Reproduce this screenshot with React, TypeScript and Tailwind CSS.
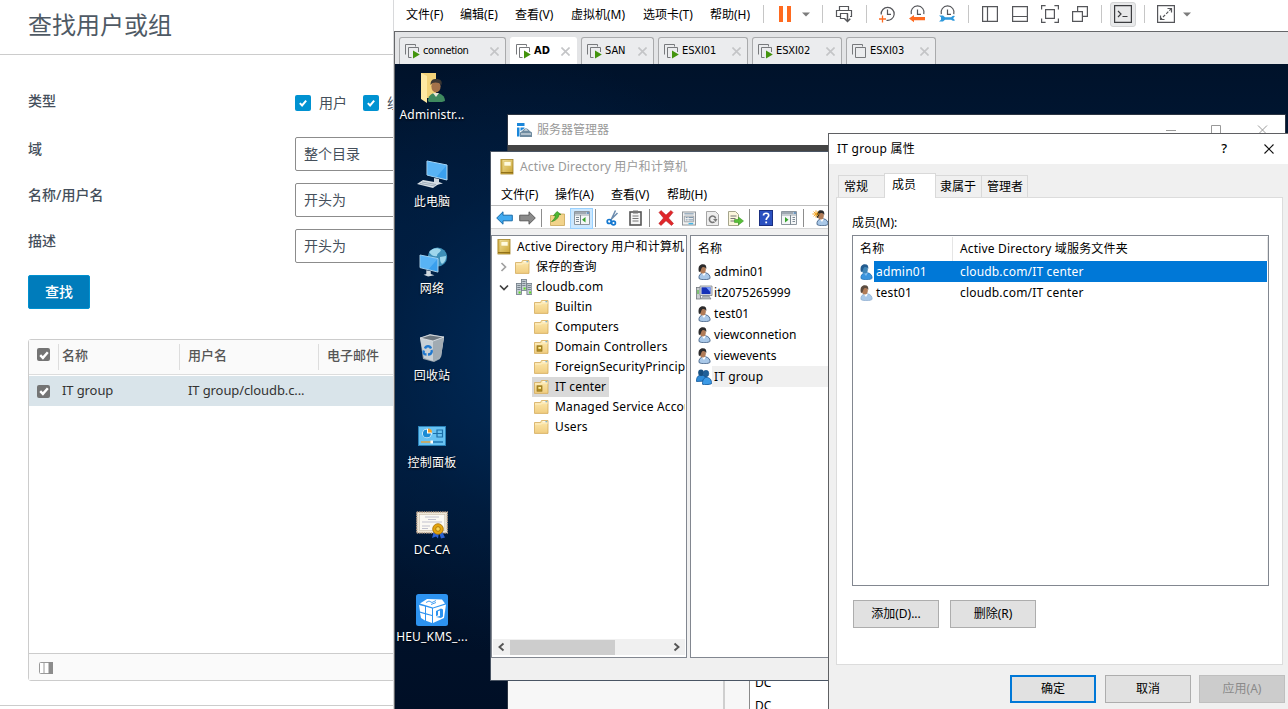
import React from "react";

const zh = "font-['Noto_Sans','Noto_Sans_CJK_SC',sans-serif]";
const tabFont = "font-['DejaVu_Sans_Condensed','Noto_Sans_CJK_SC',sans-serif]";

/* ---------- small icons ---------- */

const Caret = () => (
  <svg width="8" height="5" viewBox="0 0 8 5" className="shrink-0"><path d="M0 0.5h8L4 4.5z" fill="#7c7c7c" /></svg>
);

const Check = ({ className, size }: { className: string; size: number }) => (
  <span className={"flex shrink-0 items-center justify-center rounded-[2px] " + className}>
    <svg width={size} height={size} viewBox="0 0 12 12"><path d="M2.2 6.2 4.9 8.9 9.8 3.2" fill="none" stroke="#fff" strokeWidth="2.4" /></svg>
  </span>
);

const Book = () => (
  <svg width="14" height="16" viewBox="0 0 14 16" className="shrink-0">
    <defs><linearGradient id="bk" x1="0" y1="0" x2="1" y2="1"><stop offset="0" stopColor="#f3e3a0" /><stop offset="1" stopColor="#c9a22e" /></linearGradient></defs>
    <rect x="1" y="0.5" width="12" height="14.5" fill="url(#bk)" stroke="#a08024" strokeWidth="0.8" />
    <rect x="0.8" y="0.5" width="1.600" height="14.5" fill="#c4a23c" />
    <rect x="4" y="2.5" width="7" height="4.5" fill="#fffbe0" stroke="#d9bf62" strokeWidth="0.6" />
    <path d="M1 13.600h12" stroke="#8a6b14" strokeWidth="1" />
  </svg>
);

const Folder = ({ ou }: { ou?: boolean }) => (
  <svg width="15" height="14" viewBox="0 0 15 14" className="shrink-0">
    <defs><linearGradient id="fd" x1="0" y1="0" x2="0" y2="1"><stop offset="0" stopColor="#fde9ae" /><stop offset="1" stopColor="#f0cd80" /></linearGradient></defs>
    <path d="M0.5 2.5h6l1-2h6.5v12.9H0.5z" fill="url(#fd)" stroke="#d3ab5c" strokeWidth="0.8" />
    <path d="M8.5 1.8h3" stroke="#fff" strokeWidth="1" /><path d="M11.5 1.8h1.6" stroke="#4d9fd8" strokeWidth="1" />
    <path d="M1 4h6.5l1-1h5.5" stroke="#fff3cf" strokeWidth="0.8" fill="none" />
    {ou && <g><rect x="3" y="5.8" width="5" height="5.400" fill="#b48d22" stroke="#8e7222" strokeWidth="0.7" /><rect x="4.400" y="7" width="2.600" height="1.800" fill="#fff0a0" /></g>}
  </svg>
);

const Domain = () => (
  <svg width="16" height="16" viewBox="0 0 16 16" className="shrink-0">
    {[[5, 0], [0, 4], [10.5, 4]].map(([x, y]) => (
      <g key={x}>
        <rect x={x + 0.4} y={y + 0.4} width="5" height="11" fill="#c3ccd3" stroke="#6f7a84" strokeWidth="0.8" />
        <path d={`M${x + 1.3} ${y + 2.5}h3.2M${x + 1.3} ${y + 4.5}h3.2M${x + 1.3} ${y + 6.5}h3.2`} stroke="#65717c" strokeWidth="0.8" />
        <rect x={x + 2.6} y={y + 8.5} width="2" height="2" fill="#5edc1e" />
      </g>
    ))}
  </svg>
);

const Person = ({ tint, soft }: { tint?: boolean; soft?: boolean }) => (
  <svg width="14" height="16" viewBox="0 0 14 16" className="shrink-0">
    <path d="M2 14.500C1.500 11 3.500 9.300 6 9l2.500-.2c3 .5 4.700 2.500 4.600 5.500-1.500 1.600-8.600 2-11.100.2z" fill={tint ? "#3b95de" : "#a9c8e8"} stroke={tint ? "#2072b8" : soft ? "#8faed0" : "#36567c"} strokeWidth="0.8" />
    <path d="m4.800 9 2.200 3L8.800 9z" fill={tint ? "#7fbdf0" : "#fff"} />
    <ellipse cx="5.800" cy="5.600" rx="3" ry="3.900" fill={tint ? "#4086b8" : "#b17c58"} />
    <path d="M1.800 7.600C.8 2.200 3 .3 5.800.3c2.900 0 4 1.900 3.400 5C8.600 3.400 7 2.800 5.400 3.200 4.200 3.600 4.400 6 3 8z" fill={tint ? "#235c8f" : soft ? "#5c4c40" : "#2c2b2c"} />
  </svg>
);

const Group = () => (
  <svg width="16" height="16" viewBox="0 0 16 16" className="shrink-0">
    <path d="M.5 12.500C.4 8 2 6.500 4.500 6.300l4 .2c2 .8 3 2.500 2.900 5.500z" fill="#2f8bd8" stroke="#0e5699" strokeWidth=".8" />
    <ellipse cx="5" cy="3.800" rx="2.800" ry="3.300" fill="#174f80" />
    <ellipse cx="10" cy="4.600" rx="2.800" ry="3.300" fill="#1f6099" stroke="#0e4a86" strokeWidth=".5" />
    <path d="M6.500 15.300c-.2-4.500 1.400-6.800 4-6.900 3.400.1 5.200 2.400 5 6.300-2 1-7 1.200-9 .6z" fill="#3c9ae6" stroke="#0e5699" strokeWidth=".8" />
  </svg>
);

const Computer = () => (
  <svg width="17" height="15" viewBox="0 0 17 15" className="shrink-0">
    <rect x=".5" y="2.500" width="4" height="11.500" fill="#c9cdd0" stroke="#70777c" strokeWidth=".8" />
    <path d="M2 5v4" stroke="#4eba3a" strokeWidth="1.200" />
    <path d="M4 1h12v9.500H4z" fill="#dfe2e4" stroke="#7f868b" strokeWidth=".8" />
    <path d="M5.500 2.300h9v6.800h-9z" fill="#1631b8" /><path d="M10 2.300h4.500v5z" fill="#7ea2ff" />
    <path d="M7 11h6l2 3H5z" fill="#b3b8bc" stroke="#777e83" strokeWidth=".6" />
  </svg>
);

const VmIcon = ({ on = true }: { on?: boolean }) => (
  <svg width="15" height="15" viewBox="0 0 15 15" className="shrink-0">
    <path d="M.5 10.500V.5h10v2" fill="none" stroke="#77797c" />
    <path d={on ? "M6.500 13.500h-3v-10h10v4.500" : "M3.500 3.500h10v10h-10z"} fill="none" stroke="#77797c" />
    {on && <path d="M8 6.500v8l6.800-4z" fill="#43940d" />}
  </svg>
);

const CloseX = ({ size, color, w = 1 }: { size: number; color: string; w?: number }) => (
  <svg width={size} height={size} viewBox="0 0 10 10" className="shrink-0"><path d="M.5.5l9 9M9.500.5l-9 9" stroke={color} strokeWidth={w} /></svg>
);

/* ---------- directory search page ---------- */

const formRows = [
  { label: "域", value: "整个目录" },
  { label: "名称/用户名", value: "开头为" },
  { label: "描述", value: "开头为" },
];

function SearchPage() {
  return (
    <section className={"h-[709px] w-[393px] shrink-0 overflow-hidden bg-white text-[14px] text-[#454f5b] " + zh}>
      <div className="w-[560px]">
        <header className="flex h-[55px] items-center border-b border-[#cccccc] pb-[5px] pl-7">
          <h1 className="text-[24px] leading-none font-normal text-[#4f5a65]">查找用户或组</h1>
        </header>
        <div className="pl-7">
          <div className="flex h-[82px] pt-[36px]">
            <div className="w-[267px] leading-[20px] font-medium">类型</div>
            <div className="mt-px flex h-[22px] items-center">
              <Check className="h-4 w-4 bg-[#0092d1]" size={10} />
              <span className="ml-2 w-[44px] leading-[20px]">用户</span>
              <Check className="h-4 w-4 bg-[#0092d1]" size={10} />
              <span className="ml-2 leading-[20px]">组</span>
            </div>
          </div>
          {formRows.map((r) => (
            <div key={r.label} className="flex h-[46px]">
              <div className="w-[267px] pt-[2px] leading-[20px] font-medium">{r.label}</div>
              <div className="flex h-[34px] w-[240px] items-center rounded-[2px] border border-[#8c8c8c] pb-[2px] pl-2">{r.value}</div>
            </div>
          ))}
          <button className="flex h-[34px] w-[62px] items-center justify-center rounded-[2px] border border-[#0091d0] bg-[#007cbb] pb-[2px] font-medium text-white">查找</button>
          <div className="mt-[30px] h-[342px] w-[520px] rounded-[3px] border border-[#cccccc] text-[13px] text-[#565656]">
            <div className="flex h-[35px] border-b border-[#dddddd] bg-[#fafafa] font-medium">
              <div className="mt-[4px] mb-[4px] flex w-[30px] border-r border-[#dddddd] pt-[4px] pl-2"><Check className="h-[13px] w-[13px] bg-[#747474]" size={12} /></div>
              <div className="my-[4px] w-[121px] border-r border-[#dddddd] pl-[3px] leading-[23px]">名称</div>
              <div className="my-[4px] w-[139px] border-r border-[#dddddd] pl-[8px] leading-[23px]">用户名</div>
              <div className="my-[4px] pl-[8px] leading-[23px]">电子邮件</div>
            </div>
            <div className="mt-px flex h-[30px] items-center bg-[#d9e4ea] tracking-[-0.1px] text-[#333]">
              <div className="flex w-[33px] pl-2"><Check className="h-[13px] w-[13px] bg-[#747474]" size={12} /></div>
              <div className="w-[126px]">IT group</div>
              <div className="w-[130px]">IT group/cloudb.c...</div>
            </div>
            <div className="mt-[247px] flex h-[27px] items-center border-t border-[#cccccc] bg-[#fafafa] pt-[2px] pl-[10px]">
              <svg width="14" height="12" viewBox="0 0 14 12"><rect x=".5" y=".5" width="13" height="11" rx="1" fill="#fff" stroke="#9a9a9a" /><path d="M5 0v12" stroke="#9a9a9a" /><path d="M9.500 0H14v12H9.500z" fill="#8c8c8c" /></svg>
            </div>
          </div>
        </div>
        <div className="mt-[24px] border-t border-[#cccccc]" />
      </div>
    </section>
  );
}

/* ---------- virtual machine console ---------- */

const vmMenus = [
  ["文件(F)", "w-[54px]"], ["编辑(E)", "w-[55px]"], ["查看(V)", "w-[56px]"],
  ["虚拟机(M)", "w-[72px]"], ["选项卡(T)", "w-[67px]"], ["帮助(H)", "w-[54px]"],
];

const Slot = ({ children, w = "w-[30px]" }: { children: React.ReactNode; w?: string }) => (
  <div className={"flex h-[28px] shrink-0 items-center justify-center " + w}>{children}</div>
);
const Sep = () => <div className="h-[18px] w-px shrink-0 bg-[#c6c6c6]" />;

const Clock = ({ kind }: { kind: "add" | "back" | "tool" }) => (
  <svg width="18" height="18" viewBox="0 0 18 18">
    <path d={kind === "add" ? "M3.200 9.500A6.500 6.500 0 1 1 8.500 15.300" : "M3.300 9.200A6.500 6.500 0 1 1 15.800 9.200"} fill="none" stroke="#55565a" strokeWidth="1.200" />
    <path d="M9.500 4.500v4.800h3.500" fill="none" stroke="#55565a" strokeWidth="1.200" />
    {kind === "add" && <path d="M4.500 10.500v7M1 14h7" stroke="#ff6a1f" strokeWidth="1.300" />}
    {kind === "back" && <path d="M1 13.500 6 10v2h11v3.200H6v2z" fill="#ff6a1f" />}
    {kind === "tool" && <path d="M1 10.500h4L7 12.200h6.200A3 3 0 0 1 17 11l-1.800 2.200 1.800 2A3 3 0 0 1 13.200 14.800H7L5 16.500H1l2-1.800v-2.400z" fill="#2c98dc" />}
  </svg>
);

function VmToolbar() {
  const g = { fill: "none", stroke: "#55565a", strokeWidth: 1.2 };
  return (
    <div className={"flex h-[31px] items-center bg-white pb-[3px] text-[12px] text-black " + zh}>
      <div className="flex w-[369px] shrink-0 pl-[12px] pt-px">
        {vmMenus.map(([t, w]) => <div key={t} className={"shrink-0 whitespace-nowrap " + w}>{t}</div>)}
      </div>
      <Sep />
      <Slot w="w-[41px]"><svg width="12" height="16" viewBox="0 0 12 16"><path d="M0 0h4v16H0zM8 0h4v16H8z" fill="#ff6a1f" /></svg></Slot>
      <div className="-ml-[3px]"><Caret /></div>
      <div className="w-[12px]" />
      <Sep />
      <Slot w="w-[43px]">
        <svg width="18" height="18" viewBox="0 0 18 18" className="-ml-px"><path d="M4.500 5.500v-4h9v4M5 11.500H1.500v-6h15v6H15M10 13.500H5.500v-5h7.500" {...g} /><path d="M12.500 8.500v8M9.700 13.700l2.800 2.800 2.800-2.800" {...g} strokeWidth={1.500} /></svg>
      </Slot>
      <Sep />
      <div className="w-[5px]" />
      <Slot><Clock kind="add" /></Slot><Slot><Clock kind="back" /></Slot><Slot><Clock kind="tool" /></Slot>
      <div className="w-[6px]" /><Sep /><div className="w-[6px]" />
      <Slot><svg width="16" height="16" viewBox="0 0 16 16"><path d="M.6.6h14.800v14.800H.6zM5.500.6v14.800" {...g} /></svg></Slot>
      <Slot><svg width="16" height="16" viewBox="0 0 16 16"><path d="M.6.6h14.800v14.800H.6zM.6 10.500h14.800" {...g} /></svg></Slot>
      <Slot><svg width="18" height="18" viewBox="0 0 18 18"><path d="M.6 4.500V.6h4M13.400.6h4v4M17.400 13.400v4h-4M4.600 17.400h-4v-4M4.600 4.600h8.800v8.800H4.600z" {...g} /></svg></Slot>
      <Slot><svg width="16" height="16" viewBox="0 0 16 16"><path d="M5.600 5.500V.6h9.800v9.800h-5M.6 5.600h9.800v9.800H.6z" {...g} /></svg></Slot>
      <div className="w-[6px]" /><Sep /><div className="w-[6px]" />
      <Slot>
        <div className="flex h-[25px] w-[26px] items-center justify-center rounded-[3px] border border-[#d3d4d5] bg-[#e8e9ea]">
          <svg width="18" height="18" viewBox="0 0 18 18"><path d="M.6.6h16.800v16.800H.6zM4 6l3 3-3 3M8.500 11.500h5" {...g} stroke="#3c3d40" /></svg>
        </div>
      </Slot>
      <div className="w-[6px]" /><Sep /><div className="w-[6px]" />
      <Slot><svg width="18" height="18" viewBox="0 0 18 18"><path d="M.6.6h16.800v16.800H.6zM10.500 3.500h4v4M3.500 10.500v4h4" {...g} /><path d="M14.500 3.500l-11 11" {...g} strokeDasharray="3 1.500" /></svg></Slot>
      <div className="w-[2px]" /><Caret />
    </div>
  );
}

const vmTabs = [
  { t: "connetion", w: "w-[107px]", on: true, tr: "tracking-[-0.4px]" },
  { t: "AD", w: "w-[67px]", on: true, active: true, tr: "" },
  { t: "SAN", w: "w-[73px]", on: true, tr: "tracking-[-0.1px]" },
  { t: "ESXI01", w: "w-[90px]", on: true, tr: "tracking-[-0.1px]" },
  { t: "ESXI02", w: "w-[90px]", on: true, tr: "tracking-[-0.1px]" },
  { t: "ESXI03", w: "w-[90px]", on: false, tr: "tracking-[-0.1px]" },
];

function VmTabs() {
  return (
    <div className={"flex h-[33px] items-end gap-[4px] border-t border-[#66676a] bg-[#e3e4e6] pl-[4px] text-[11px] text-black " + tabFont}>
      {vmTabs.map((tab) => (
        <div key={tab.t} className={"flex h-[27px] shrink-0 items-center rounded-t-[3px] border border-b-0 pr-[6px] pl-[5px] " + tab.w + (tab.active ? " border-white bg-white font-bold" : " border-[#a9aaac] bg-[#ebecee]")}>
          <VmIcon on={tab.on} />
          <span className={"ml-[3px] grow whitespace-nowrap pt-px " + tab.tr}>{tab.t}</span>
          <CloseX size={9} color="#c4c5c7" w={1.8} />
        </div>
      ))}
    </div>
  );
}

/* ---------- desktop icons ---------- */

const Monitor = ({ x, y }: { x: number; y: number }) => (
  <g transform={`translate(${x} ${y})`}>
    <path d="M0 0 20 4v15L0 14z" fill="#3aa0ee" stroke="#b9dcf2" strokeWidth="1" />
    <path d="M0 0 20 4 9 16.500 0 14z" fill="#6dc0fa" opacity=".6" />
    <path d="M7 17l5 1v3l4 1.500-7 1.500-5-2 3-1z" fill="#cfd8df" />
  </g>
);

const desktop = [
  { t: "Administr...", i: <g><path d="M5 1h15v25H5z" fill="#f3d37a" /><path d="M5 1l6 3v27l-6-4z" fill="#ffe9a3" /><path d="M12 29c0-5 3-8 8-8s9 3 9 8l-3 1H13z" fill="#3f8a5f" /><ellipse cx="20" cy="14.500" rx="4.600" ry="6" fill="#a3724a" /><path d="M14.500 13c0-5 2-6 6-6s6 2 5 6c-2-3-7-3-9-2z" fill="#3b3733" /><path d="m17 21 3 4 3-4z" fill="#e8e6d8" /></g> },
  { t: "此电脑", i: <g><Monitor x={11} y={2} /><path d="M1 25l6-4 17 3-7 5z" fill="#d9e0e5" /><path d="M4 24.500l15 2.500M6 23l14 2.500" stroke="#8fa0ad" strokeWidth=".8" /></g> },
  { t: "网络", i: <g><circle cx="21.500" cy="11" r="9.600" fill="#3d8fb8" /><path d="M13 6c3-4 9-5 12-2-1 3-4 3-4 6-3 1-6-1-8-4zM24 11l6-1c0 4-1 6-4 8-2-2-2-4-2-7z" fill="#9fd7ec" /><g transform="translate(4 9) scale(.9)"><Monitor x={0} y={0} /></g></g> },
  { t: "回收站", i: <g><path d="M4 5l10-4 14 3-4 22-6 3-11-3z" fill="#9aa6af" /><path d="M4 5l13 3 11-4-3 20-8 4-9-3z" fill="#c8d0d6" /><path d="M17 8l11-4-3 20-8 4z" fill="#a1abb3" /><path d="M4 5l10-3 14 2-11 4z" fill="#6c767e" stroke="#e4e9ec" strokeWidth=".8" /><path d="M9 15.500c1-3 5-3 6 0M15.500 17c1 3-1 4.500-3.500 4.500M10.500 21.500c-3 0-3.500-2-2.500-4" fill="none" stroke="#1f78cf" strokeWidth="2.400" /></g> },
  { t: "控制面板", i: <g><rect x="2.500" y="6.500" width="27" height="19" fill="#68c2f2" stroke="#2b82b8" /><circle cx="11" cy="13.500" r="4.700" fill="#fff" /><path d="M11 13.500V9.500a4 4 0 1 0 3.900 4z" fill="#198bd4" /><path d="M12 12.500v-4a4 4 0 0 1 4 4z" fill="#f3a028" /><path d="M21 10h5.500v7H21zM21 13.500h5.500M17 13.500h4" fill="none" stroke="#1c6fa8" strokeWidth="1.200" /><path d="M5 22h10" stroke="#f3a028" strokeWidth="1.300" /><path d="M15 22h12" stroke="#176ba8" strokeWidth="1.300" /><rect x="14.500" y="20.500" width="2.500" height="3" fill="#fff" /></g> },
  { t: "DC-CA", i: <g><rect x=".8" y="5" width="30.500" height="21" fill="#eee7d8" stroke="#b39b84" strokeWidth="1.400" strokeDasharray="1.500 .8" /><rect x="3.300" y="7.500" width="25.500" height="16" fill="#fbf9f3" stroke="#c9bda9" strokeWidth=".6" /><path d="M9 10h14M12 12.500h8M6 15h20M6 19h8M6 21.500h6" stroke="#b4b4c4" strokeWidth=".8" /><path d="M18 24l-2 7 4-1.500 2 2 1-6 2 6 4-1-3-6z" fill="#2c62d4" /><circle cx="22" cy="22" r="5.300" fill="#e5a60e" stroke="#a56d04" strokeWidth=".8" /><circle cx="22" cy="22" r="2.300" fill="#f8d658" stroke="#a56d04" strokeWidth=".8" /></g> },
  { t: "HEU_KMS_...", i: <g><rect width="32" height="32" rx="2.500" fill="#2d93f0" /><path d="M4 9.500 11 5l15 .5 3 4-12 4z" fill="#fff" /><path d="M3 11l6 1.500v6.500L4 17.500zM10 12.800l6 1.700v6.500l-6-1.700zM4 18.800l5 1.400v6.300L5 24zM10 20.500l6 1.600v7l-6-2.300z" fill="#fff" /><path d="M17 14.500 30 10.500l-2 13.500-11 5z" fill="#fff" /><path d="M20 17l5-2.500 2 1v7l-2 1.500-5-1 4-1v-5.500l-2 .8v4l-2 1z" fill="#2d93f0" /><path d="M10 8.500l3-1.500 3 1.500 4-2M15 10.500l5-2" fill="none" stroke="#2d93f0" strokeWidth=".9" /></g> },
];

function DesktopIcons() {
  return (
    <div className={"flex w-[74px] flex-col pt-[8px] text-[12px] text-white " + zh}>
      {desktop.map((d) => (
        <div key={d.t} className="flex h-[87px] shrink-0 flex-col items-center">
          <svg width="32" height="32" viewBox="0 0 32 32" className="shrink-0">{d.i}</svg>
          <span className="leading-[22px] tracking-[0.2px] whitespace-nowrap [text-shadow:0_1px_2px_#000]">{d.t}</span>
        </div>
      ))}
    </div>
  );
}

/* ---------- server manager ---------- */

function ServerManager() {
  return (
    <div className={"absolute top-[114px] left-[507px] flex h-[595px] w-[779px] flex-col overflow-hidden border border-b-0 border-[#2b3442] bg-[#f7f7f7] " + zh}>
      <div className="flex h-[30px] shrink-0 items-center bg-white pr-[17px] pl-[9px] text-[12px] text-[#999]">
        <svg width="15" height="15" viewBox="0 0 15 15"><path d="M0 0h7.500v3H0zM0 4.500h2.500v9H0z" fill="#1a86d9" /><path d="M3.500 4.500h4v.8L3.500 8z" fill="#1a86d9" /><path d="M3 9.500 6 7.500h6l3 2v4.500H3z" fill="#6f8ba0" /><path d="M6 8q3-4.500 6 0" fill="none" stroke="#6f8ba0" strokeWidth="1.200" /><path d="M4 11h10" stroke="#fff" strokeWidth=".9" /></svg>
        <span className="ml-[5px] grow">服务器管理器</span>
        <svg width="102" height="10" viewBox="0 0 102 10"><path d="M0 5.500h10M45.500.5h9v9h-9zM92 .5l9 9M101 .5l-9 9" fill="none" stroke="#999" /></svg>
      </div>
      <div className="h-[8px] shrink-0 bg-[#444444]" />
      <div className="flex grow pt-[520px] text-[12px] text-black">
        <div className="w-[217px] shrink-0 border-r-2 border-[#cfcfcf]" />
        <div className="w-[24px] shrink-0" />
        <div className="grow border-l border-[#8a8a8a] bg-white pl-[5px]">
          <div className="h-[23px] leading-[20px]">DC</div>
          <div className="h-[23px] leading-[20px]">DC</div>
        </div>
      </div>
    </div>
  );
}

/* ---------- directory console ---------- */

const TSep = () => <div className="h-[18px] w-px shrink-0 bg-[#8d8d8d]" />;
const Tool = ({ children, w }: { children: React.ReactNode; w: string }) => <div className={"flex h-[22px] shrink-0 items-center justify-center " + w}>{children}</div>;

const PaneIcon = ({ flip }: { flip?: boolean }) => (
  <svg width="16" height="14" viewBox="0 0 16 14" className="shrink-0"><path d="M.5.5h15v13H.5z" fill="#f4f6f7" stroke="#8d969e" /><path d="M1 2h11" stroke="#8a959f" strokeWidth="1.600" /><path d="M12.500 2h2.500" stroke="#4d7fae" strokeWidth="1.600" /><path d="M1 4h14" stroke="#9aa4ad" /><path d={flip ? "M9.500 4v9.500" : "M6.500 4v9.500"} stroke="#7b8791" /><path d={flip ? "M4 6v5.500L7.500 8.700z" : "M11.500 6v5.500L8 8.700z"} fill="#35a32b" /><path d={flip ? "M11.500 6.500h2.500M11.500 8.500h2.500M11.500 10.500h2.500" : "M2 6.500h3M2 8.500h3M2 10.500h3"} stroke="#7c8894" /></svg>
);

function AdToolbar() {
  return (
    <div className="flex h-[23px] shrink-0 items-center border-b border-[#d5d5d5] bg-white pt-[2px] pl-[2px]">
      <Tool w="w-[22px]"><svg width="17" height="14" viewBox="0 0 17 14"><path d="M.7 7 7 .8v3.400h9.300v5.600H7v3.400z" fill="#41aaf0" stroke="#186ba8" /></svg></Tool>
      <Tool w="w-[25px]"><svg width="17" height="14" viewBox="0 0 17 14"><path d="M16.300 7 10 .8v3.400H.7v5.600H10v3.400z" fill="#8b8b8b" stroke="#5c5c5c" /></svg></Tool>
      <div className="w-[1px]" /><TSep />
      <Tool w="w-[28px]"><svg width="15" height="15" viewBox="0 0 15 15" className="ml-[3px]"><path d="M.5 4.500h5l1-1.500h8v11.500H.5z" fill="#f2d38a" stroke="#c9a456" strokeWidth=".8" /><path d="M1.500 10.500C2.500 9.500 5 8 5.500 4.500H3.500L7 .5l4 3H9C8.500 7.500 5 10 1.500 10.500z" fill="#4db833" stroke="#2c8118" strokeWidth=".6" /></svg></Tool>
      <div className="flex h-[21px] w-[23px] shrink-0 items-center justify-center border border-[#99d1ff] bg-[#cce8ff]"><PaneIcon /></div>
      <div className="w-[2px]" /><TSep />
      <Tool w="w-[32px]"><svg width="13" height="16" viewBox="0 0 13 16"><path d="M9.500.5 5 10M11.500 3 4 10.500" stroke="#6c8cae" strokeWidth="1.500" fill="none" /><circle cx="3.200" cy="11.500" r="2" fill="none" stroke="#1578d0" strokeWidth="1.700" /><circle cx="7.500" cy="13" r="1.900" fill="none" stroke="#1578d0" strokeWidth="1.700" /></svg></Tool>
      <Tool w="w-[15px]"><svg width="13" height="16" viewBox="0 0 13 16"><rect x="1" y="2" width="11" height="13" fill="#f5f5f5" stroke="#555" strokeWidth="1.600" /><path d="M4 .5h5v3H4z" fill="#777" /><path d="M3.500 6h6M3.500 8.500h6M3.500 11h6" stroke="#777" /></svg></Tool>
      <div className="w-[6px]" /><TSep />
      <Tool w="w-[32px]"><svg width="16" height="16" viewBox="0 0 16 16"><path d="m1 2.500 2-2L8 5l5-4.500 2 2L10.500 8l5 5.500-2 2L8 10.800l-5 4.700-2.200-2L5.500 8z" fill="#e0262a" stroke="#b01418" strokeWidth=".5" /></svg></Tool>
      <Tool w="w-[14px]"><svg width="15" height="15" viewBox="0 0 15 15"><rect x=".5" y=".5" width="14" height="14" fill="#f1f1f1" stroke="#8a8f94" /><path d="M2.500 2.500h10M4 6.500h2M7 6.500h5M4 9h2M7 9h5" stroke="#6d8aa5" /><path d="M2.500 5v6h10V5z" fill="none" stroke="#9aa0a5" /><path d="M7 13h5" stroke="#43b5e6" strokeWidth="1.500" /></svg></Tool>
      <Tool w="w-[32px]"><svg width="13" height="15" viewBox="0 0 13 15"><path d="M.5.500h9l3 3v11H.5z" fill="#ededed" stroke="#a5a5a5" /><path d="M8.500 10.800A3.200 3.200 0 1 1 9.700 7.500" fill="none" stroke="#777" strokeWidth="1.600" /><path d="M7 8h4.500L9.700 11z" fill="#777" /></svg></Tool>
      <Tool w="w-[16px]"><svg width="16" height="15" viewBox="0 0 16 15"><path d="M.5.500h7l3 3v11H.5z" fill="#fbf6dc" stroke="#a5a58c" /><path d="M2.500 5h6M2.500 7.500h5M2.500 10h5" stroke="#767676" /><path d="M6.500 8.500h4v-2.500l5 4-5 4v-2.500h-4z" fill="#58bf38" stroke="#2e8a1b" strokeWidth=".5" /></svg></Tool>
      <div className="w-[5px]" /><TSep />
      <Tool w="w-[31px]"><svg width="14" height="16" viewBox="0 0 14 16"><rect x=".5" y=".5" width="13" height="15" fill="#2a50c0" stroke="#1a2f80" /><path d="M4.500 5.500C4.500 2.500 9.700 2.500 9.700 5.500c0 2-2.500 2-2.500 4.500" fill="none" stroke="#fff" strokeWidth="1.700" /><path d="M6.300 11.500h1.800v1.800H6.300z" fill="#fff" /></svg></Tool>
      <Tool w="w-[16px]"><PaneIcon flip /></Tool>
      <div className="w-[6px]" /><TSep />
      <div className="relative ml-[11px] h-[16px] w-[14px] shrink-0">
        <Person />
        <svg width="8" height="8" viewBox="0 0 10 9" className="absolute top-0 -left-[3px]"><path d="M5 0v9M.5 4.500h9M2 1.500l6 6M8 1.500l-6 6" stroke="#f5a623" strokeWidth="1.200" /></svg>
      </div>
    </div>
  );
}

const treeFolders: [string, boolean][] = [
  ["Builtin", false], ["Computers", false], ["Domain Controllers", true], ["ForeignSecurityPrincipals", false],
  ["IT center", true], ["Managed Service Accounts", false], ["Users", false],
];
const adObjects = ["admin01", "it2075265999", "test01", "viewconnetion", "viewevents", "IT group"];
const adMenus = [["文件(F)", "w-[54px]"], ["操作(A)", "w-[56px]"], ["查看(V)", "w-[56px]"], ["帮助(H)", "w-[56px]"]];

function DirectoryWindow() {
  return (
    <div className={"absolute top-[151px] left-[490px] flex h-[530px] w-[420px] flex-col border border-[#4a5564] bg-[#f0f0f0] text-[12px] text-black " + zh}>
      <div className="flex h-[31px] shrink-0 items-center bg-white pb-[2px] pl-[9px] tracking-[0.15px] text-[#999]"><Book /><span className="ml-[6px] whitespace-nowrap">Active Directory 用户和计算机</span></div>
      <div className="flex h-[23px] shrink-0 items-center border-b border-[#bdbdbd] bg-white pt-px pl-[10px]">
        {adMenus.map(([t, w]) => <div key={t} className={"shrink-0 " + w}>{t}</div>)}
      </div>
      <AdToolbar />
      <div className="mt-[6px] flex h-[423px] shrink-0 gap-[3px]">
        <div className="flex w-[196px] shrink-0 flex-col border border-[#828790] bg-white">
          <div className="flex grow flex-col overflow-hidden pt-[1px] pr-[1px] tracking-[0.15px]">
            <div className="flex h-5 items-center overflow-hidden pl-[5px] whitespace-nowrap"><Book /><span className="ml-[6px]">Active Directory 用户和计算机</span></div>
            <div className="flex h-5 items-center pl-[8px]">
              <svg width="7" height="10" viewBox="0 0 7 10"><path d="M1.500 1l4 4-4 4" fill="none" stroke="#a0a0a0" strokeWidth="1.700" /></svg>
              <div className="w-[8px]" /><Folder /><span className="ml-[6px]">保存的查询</span>
            </div>
            <div className="flex h-5 items-center pl-[7px]">
              <svg width="10" height="7" viewBox="0 0 10 7"><path d="M1 1.500l4 4 4-4" fill="none" stroke="#404040" strokeWidth="1.700" /></svg>
              <div className="w-[7px]" /><Domain /><span className="ml-[4px]">cloudb.com</span>
            </div>
            {treeFolders.map(([t, ou]) => (
              <div key={t} className="flex h-5 shrink-0 overflow-hidden pl-[40px] whitespace-nowrap">
                <div className={"flex h-5 shrink-0 items-center pr-[3px] pl-[2px] " + (t === "IT center" ? "bg-[#d9d9d9]" : "")}><Folder ou={ou} /><span className="ml-[6px]">{t}</span></div>
              </div>
            ))}
          </div>
          <div className="mx-[1px] mb-[2px] flex h-[16px] shrink-0 items-center bg-[#f0f0f0]">
            <svg width="17" height="16" viewBox="0 0 17 16"><path d="M10.500 4.500 6.500 8l4 3.500" fill="none" stroke="#555" strokeWidth="1.900" /></svg>
            <div className="h-[15px] w-[105px] bg-[#cdcdcd]" />
            <div className="grow" />
            <svg width="17" height="16" viewBox="0 0 17 16"><path d="M6.500 4.500l4 3.500-4 3.500" fill="none" stroke="#555" strokeWidth="1.900" /></svg>
          </div>
        </div>
        <div className="grow border border-r-0 border-[#828790] bg-white pt-[1px]">
          <div className="flex h-[24px] items-center pl-[7px]">名称</div>
          {adObjects.map((t) => (
            <div key={t} className="flex h-[21px] items-center pl-[5px]">
              <div className="flex w-[16px] shrink-0 justify-center">{t === "IT group" ? <Group /> : t.startsWith("it2") ? <Computer /> : <Person />}</div>
              <div className={"flex h-[21px] grow items-center pl-[2px] " + (t === "IT group" ? "bg-[#f0f0f0] tracking-[0.15px]" : "tracking-[0.05px]")}>{t}</div>
            </div>
          ))}
        </div>
      </div>
    </div>
  );
}

/* ---------- group properties ---------- */

const PushButton = ({ children, kind = "normal" }: { children: React.ReactNode; kind?: "normal" | "default" | "off" }) => (
  <button className={"flex h-[28px] w-[86px] shrink-0 items-center justify-center " + (kind === "default" ? "border-2 border-[#0078d7] bg-[#e1e1e1]" : kind === "off" ? "border border-[#bfbfbf] bg-[#cccccc] text-[#8a8a8a]" : "border border-[#adadad] bg-[#e1e1e1]")}>{children}</button>
);

function GroupProperties() {
  return (
    <div className={"absolute top-[133px] left-[828px] flex h-[576px] w-[460px] flex-col overflow-hidden border-t border-l border-[#5f6063] bg-[#f0f0f0] text-[12px] text-black " + zh}>
      <div className="flex h-[30px] shrink-0 items-center bg-white pr-[14px] pl-[8px]">
        <span className="grow tracking-[0.25px]">IT group 属性</span>
        <span className="mr-[37px] text-[13px] font-medium">?</span>
        <CloseX size={10} color="#111" w={1.1} />
      </div>
      <div className="flex h-[33px] shrink-0 items-end pl-[9px]">
        <div className="flex h-[22px] w-[46px] items-center border border-r-0 border-b-0 border-[#d9d9d9] pt-px pl-[5px]">常规</div>
        <div className="z-10 -mb-px flex h-[25px] w-[52px] items-start border border-b-0 border-[#d9d9d9] bg-white pt-[2px] pl-[7px]">成员</div>
        <div className="flex h-[22px] w-[46px] items-center border-t border-r border-[#d9d9d9] pt-px pl-[4px]">隶属于</div>
        <div className="flex h-[22px] w-[46px] items-center border-t border-r border-[#d9d9d9] pt-px pl-[5px]">管理者</div>
      </div>
      <div className="ml-[7px] flex h-[468px] w-[447px] shrink-0 flex-col border border-[#dcdcdc] bg-white pl-[15px]">
        <div className="flex h-[37px] shrink-0 items-end pb-[3px]">成员(M):</div>
        <div className="flex h-[351px] w-[417px] shrink-0 flex-col border border-[#828790] p-[1px] tracking-[0.18px]">
          <div className="flex h-[24px] w-[414px] items-center border-r border-[#e5e5e5]">
            <div className="flex h-full w-[99px] items-center border-r border-[#e5e5e5] pl-[6px]">名称</div>
            <div className="pl-[7px]">Active Directory 域服务文件夹</div>
          </div>
          {["admin01", "test01"].map((n, k) => (
            <div key={n} className="flex h-[21px] items-center pl-[5px]">
              <div className="flex w-[15px] shrink-0"><Person tint={k === 0} soft /></div>
              <div className={"flex h-[21px] grow items-center pl-[2px] " + (k === 0 ? "bg-[#0078d7] text-white" : "")}>
                <span className="w-[84px]">{n}</span><span>cloudb.com/IT center</span>
              </div>
            </div>
          ))}
        </div>
        <div className="mt-[14px] flex gap-[11px] pl-px"><PushButton>添加(D)...</PushButton><PushButton>删除(R)</PushButton></div>
      </div>
      <div className="mt-[10px] flex pl-[181px]">
        <PushButton kind="default">确定</PushButton><div className="w-[9px]" /><PushButton>取消</PushButton><div className="w-[8px]" /><PushButton kind="off">应用(A)</PushButton>
      </div>
    </div>
  );
}

export default function App() {
  return (
    <main className="relative flex h-[709px] w-[1288px] overflow-hidden bg-white">
      <SearchPage />
      <section className="flex w-[895px] shrink-0 flex-col border-l border-[#d8d9db]">
        <VmToolbar />
        <div className="flex grow flex-col border-l border-[#66676a]">
          <VmTabs />
          <div className="grow bg-[radial-gradient(ellipse_260px_300px_at_130px_290px,#002a58_0%,#00204588_55%,transparent_100%),linear-gradient(180deg,#00122a_0%,#001b3c_25%,#001d40_55%,#00122b_80%,#000f26_100%)]">
            <DesktopIcons />
          </div>
        </div>
      </section>
      <ServerManager />
      <DirectoryWindow />
      <GroupProperties />
    </main>
  );
}
